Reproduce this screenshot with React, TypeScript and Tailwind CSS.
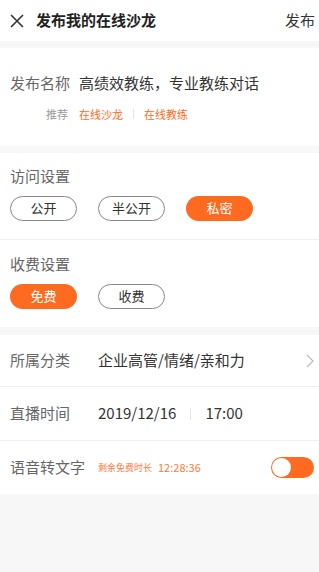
import React from 'react';

const font = { fontFamily: '"Noto Sans CJK SC", "Liberation Sans", sans-serif' };

const Pill = ({ label, active }: { label: string; active?: boolean }) => (
  <div
    className={`flex h-[25px] w-[67px] items-center justify-center rounded-full text-[13px] ${
      active ? 'bg-[#ff6a21] text-white' : 'border border-[#888] text-[#333]'
    }`}
  >
    {label}
  </div>
);

export default function App() {
  return (
    <div className="flex min-h-[572px] w-[319px] flex-col bg-[#f7f7f7]" style={font}>
      {/* header */}
      <div className="flex h-[41px] items-center bg-white pl-[9px] pr-[4px]">
        <svg width="16" height="16" viewBox="0 0 16 16" className="mr-[11px]">
          <path d="M2 2 L14 14 M14 2 L2 14" stroke="#333" strokeWidth="1.6" fill="none" />
        </svg>
        <span className="flex-1 text-[15px] font-bold text-[#222]">发布我的在线沙龙</span>
        <span className="text-[15px] text-[#333]">发布</span>
      </div>

      {/* name */}
      <div className="mt-[7px] flex h-[98px] flex-col bg-white px-[10px] pt-[24px]">
        <div className="flex items-center text-[15px]">
          <span className="w-[69px] text-[#666]">发布名称</span>
          <span className="text-[#333]">高绩效教练，专业教练对话</span>
        </div>
        <div className="mt-[11px] flex items-center text-[11px]">
          <span className="ml-[36px] w-[33px] text-[#999]">推荐</span>
          <span className="text-[#ff6a21]">在线沙龙</span>
          <span className="mx-[10px] h-[10px] w-px bg-[#e5e5e5]" />
          <span className="text-[#ff6a21]">在线教练</span>
        </div>
      </div>

      {/* access */}
      <div className="mt-[7px] flex flex-col bg-white">
        <div className="flex h-[87px] flex-col border-b border-[#f0f0f0] px-[10px] pt-[12px]">
          <span className="text-[15px] text-[#666]">访问设置</span>
          <div className="mt-[8px] flex gap-[21px]">
            <Pill label="公开" />
            <Pill label="半公开" />
            <Pill label="私密" active />
          </div>
        </div>
        <div className="flex h-[87px] flex-col px-[10px] pt-[13px]">
          <span className="text-[15px] text-[#666]">收费设置</span>
          <div className="mt-[8px] flex gap-[21px]">
            <Pill label="免费" active />
            <Pill label="收费" />
          </div>
        </div>
      </div>

      {/* rows */}
      <div className="mt-[8px] flex flex-col bg-white">
        <div className="flex h-[52px] items-center border-b border-[#f0f0f0] px-[10px] text-[15px]">
          <span className="w-[88px] text-[#666]">所属分类</span>
          <span className="flex-1 text-[#333]">企业高管/情绪/亲和力</span>
          <svg width="10" height="14" viewBox="0 0 10 14" className="mr-[-6px]">
            <path d="M2 1 L8 7 L2 13" stroke="#bbb" strokeWidth="1.2" fill="none" />
          </svg>
        </div>
        <div className="flex h-[54px] items-center border-b border-[#f0f0f0] px-[10px] text-[15px]">
          <span className="w-[88px] text-[#666]">直播时间</span>
          <span className="text-[#333]">2019/12/16</span>
          <span className="mx-[14px] h-[12px] w-px bg-[#e5e5e5]" />
          <span className="text-[#333]">17:00</span>
        </div>
        <div className="flex h-[53px] items-center px-[10px]">
          <span className="w-[88px] text-[15px] text-[#666]">语音转文字</span>
          <span className="text-[9px] text-[#ff7a40]">剩余免费时长</span>
          <span className="ml-[6px] flex-1 text-[11px] text-[#ff7a40]">12:28:36</span>
          <div className="mr-[-5px] flex h-[21px] w-[43px] items-center rounded-full bg-[#ff6a21] p-[1px]">
            <div className="h-[19px] w-[19px] rounded-full bg-white" />
          </div>
        </div>
      </div>
    </div>
  );
}
